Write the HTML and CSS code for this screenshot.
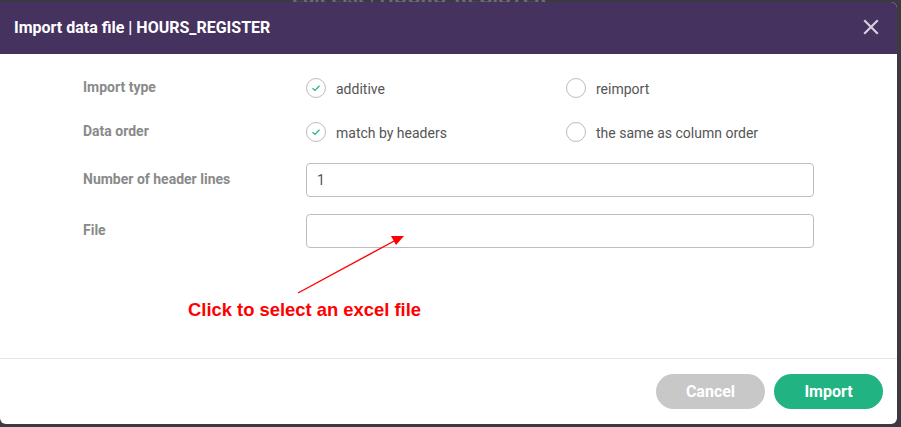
FILE: index.html
```html
<!DOCTYPE html>
<html>
<head>
    <meta charset="UTF-8">
    <title>Import data file</title>
    <link rel="stylesheet" href="styles.css">
</head>
<body>
  <div class="behind">Edit List | HOURS_REGISTER</div>
  <div class="dialog">
    <div class="dialog-head">
      <span class="dialog-title">Import data file | HOURS_REGISTER</span>
      <svg class="close" width="16" height="16" viewBox="0 0 16 16">
        <path d="M2 2 L14 14 M14 2 L2 14" stroke="#d6d0de" stroke-width="2.2" stroke-linecap="square"/>
      </svg>
    </div>

    <div class="dialog-body">
      <div class="row row-first">
        <label class="field-label">Import type</label>
        <div class="option">
          <span class="radio">
            <svg width="10" height="8" viewBox="0 0 10 8"><path d="M1.5 4.2 L4 6.4 L8.5 1.8" fill="none" stroke="#22b383" stroke-width="1.3"/></svg>
          </span>
          <span class="option-text">additive</span>
        </div>
        <div class="option">
          <span class="radio"></span>
          <span class="option-text">reimport</span>
        </div>
      </div>

      <div class="row row-second">
        <label class="field-label">Data order</label>
        <div class="option">
          <span class="radio">
            <svg width="10" height="8" viewBox="0 0 10 8"><path d="M1.5 4.2 L4 6.4 L8.5 1.8" fill="none" stroke="#22b383" stroke-width="1.3"/></svg>
          </span>
          <span class="option-text">match by headers</span>
        </div>
        <div class="option">
          <span class="radio"></span>
          <span class="option-text">the same as column order</span>
        </div>
      </div>

      <div class="row row-third">
        <label class="field-label">Number of header lines</label>
        <input class="text-input" type="text" value="1">
      </div>

      <div class="row">
        <label class="field-label">File</label>
        <input class="text-input" type="text" value="">
      </div>

      <div class="hint">Click to select an excel file</div>

      <!-- annotation arrow drawn over the form -->
      <svg class="arrow" width="120" height="70" viewBox="0 0 120 70">
        <path d="M2 66 L100 13" stroke="#f00" stroke-width="1.4"/>
        <path d="M108 9 L95 9 L100 18 Z" fill="#f00"/>
      </svg>
    </div>

    <div class="dialog-foot">
      <button type="button" class="btn btn-cancel">Cancel</button>
      <button type="button" class="btn btn-import">Import</button>
    </div>
  </div>
</body>
</html>
```

FILE: styles.css
```css
html {
  font-family: Roboto, "Liberation Sans", Arial, sans-serif;
}
body {
  margin: 0;
  padding-top: 2px;
  width: 901px;
  height: 425px;
  background-color: #3c3a40;
  position: relative;
  overflow: hidden;
}
.behind {
  position: absolute;
  top: -15px;
  left: 292px;
  color: #6f6a76;
  font-size: 20px;
  font-weight: bold;
}
.dialog {
  position: relative;
  width: 897px;
  height: 422px;
  background-color: #fff;
  border-radius: 0 6px 6px 6px;
  overflow: hidden;
  display: flex;
  flex-direction: column;
}
.dialog-head {
  height: 52px;
  background-color: #46325f;
  display: flex;
  align-items: center;
  justify-content: space-between;
  padding: 0 18px 0 14px;
}
.dialog-title {
  color: #fff;
  font-size: 16px;
  font-weight: bold;
  padding-bottom: 2px;
}
.close {
  margin-bottom: 3px;
}
.dialog-body {
  position: relative;
  flex: 1;
  padding: 17px 0 0 83px;
}
.row {
  display: flex;
  align-items: center;
  height: 34px;
}
.row-first {
  margin-bottom: 10px;
}
.row-second {
  margin-bottom: 14px;
}
.row-third {
  margin-bottom: 17px;
}
.field-label {
  width: 223px;
  color: #8a8a8a;
  font-size: 14px;
  font-weight: bold;
  margin-top: -3px;
}
.option {
  width: 260px;
  display: flex;
  align-items: center;
}
.radio {
  box-sizing: border-box;
  width: 20px;
  height: 20px;
  border: 1px solid #bdbdbd;
  border-radius: 50%;
  display: flex;
  align-items: center;
  justify-content: center;
  margin-right: 10px;
}
.option-text {
  color: #555;
  font-size: 14px;
  padding-top: 1px;
}
.text-input {
  box-sizing: border-box;
  width: 508px;
  height: 34px;
  border: 1px solid #bdbdbd;
  border-radius: 4px;
  padding: 0 10px;
  font-family: Roboto, sans-serif;
  font-size: 14px;
  color: #555;
}
.hint {
  margin: 51px 0 0 105px;
  color: #f00;
  font-family: "Liberation Sans", Arial, sans-serif;
  font-size: 18.4px;
  font-weight: bold;
}
.arrow {
  position: absolute;
  left: 296px;
  top: 173px;
}
.dialog-foot {
  height: 65px;
  border-top: 1px solid #e6e6e6;
  display: flex;
  justify-content: flex-end;
  align-items: center;
  gap: 9px;
  padding-right: 14px;
}
.btn {
  width: 109px;
  height: 35px;
  border: none;
  border-radius: 18px;
  color: #fff;
  font-family: Roboto, sans-serif;
  font-size: 16px;
  font-weight: bold;
}
.btn-cancel {
  background-color: #c8c8c8;
}
.btn-import {
  background-color: #22b383;
}
```
